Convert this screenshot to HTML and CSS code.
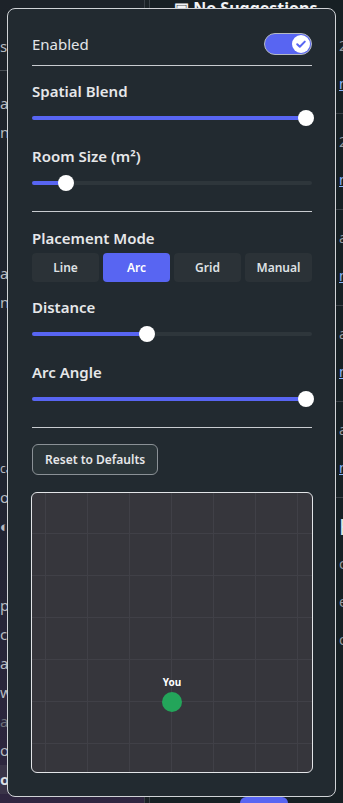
FILE: index.html
```html
<!DOCTYPE html>
<html lang="en">
<head>
  <meta charset="UTF-8" />
  <meta name="viewport" content="width=device-width, initial-scale=1.0"/>
  <title>Spatial Audio Settings</title>
  <link rel="stylesheet" href="styles.css">
</head>
<body>
  <!-- page behind the popout -->
  <div class="page">
    <div class="side">
      <div class="side-row head">st</div>
      <div class="side-group g1">
        <div class="side-row">a</div>
        <div class="side-row">n</div>
      </div>
      <div class="side-group g2">
        <div class="side-row">a</div>
        <div class="side-row">n</div>
      </div>
      <div class="side-group g3">
        <div class="side-row small">ca</div>
        <div class="side-row">o v</div>
        <div class="side-row">◐</div>
      </div>
      <div class="side-group g4">
        <div class="side-row">p</div>
        <div class="side-row">ch</div>
        <div class="side-row">ar</div>
        <div class="side-row">w</div>
        <div class="side-row dim">a</div>
        <div class="side-row">ou</div>
        <div class="side-row strong">of</div>
      </div>
    </div>
    <div class="main">
      <div class="main-title">▣ No Suggestions</div>
      <div class="main-row">2d</div>
      <div class="main-row link">n</div>
      <div class="main-row">2d</div>
      <div class="main-row link">n</div>
      <div class="main-row">a</div>
      <div class="main-row link">n</div>
      <div class="main-row">a</div>
      <div class="main-row link">n</div>
      <div class="main-row">a</div>
      <div class="main-row link">n</div>
      <div class="main-row big">H</div>
      <div class="main-row">c</div>
      <div class="main-row">e</div>
      <div class="main-row">on</div>
      <div class="main-bottom"><span class="pill"></span></div>
    </div>
  </div>

  <!-- Popout -->
  <div class="panel">
    <div class="toggle-row">
      <span>Enabled</span>
      <div class="toggle on">
        <span class="knob">
          <svg width="18" height="18" viewBox="0 0 18 18"><path d="M5.2 9.3l2.6 2.5 5-5.2" fill="none" stroke="#5865f2" stroke-width="2" stroke-linecap="round" stroke-linejoin="round"/></svg>
        </span>
      </div>
    </div>
    <hr class="divider first">

    <div class="field">
      <label>Spatial Blend</label>
      <div class="slider" style="--v: 98%"><div class="fill"></div><div class="thumb"></div></div>
    </div>
    <div class="field">
      <label>Room Size (m²)</label>
      <div class="slider" style="--v: 12%"><div class="fill"></div><div class="thumb"></div></div>
    </div>
    <hr class="divider">

    <div class="field mode">
      <label>Placement Mode</label>
      <div class="segmented">
        <button>Line</button>
        <button class="active">Arc</button>
        <button>Grid</button>
        <button>Manual</button>
      </div>
    </div>
    <div class="field">
      <label>Distance</label>
      <div class="slider" style="--v: 41%"><div class="fill"></div><div class="thumb"></div></div>
    </div>
    <div class="field">
      <label>Arc Angle</label>
      <div class="slider" style="--v: 98%"><div class="fill"></div><div class="thumb"></div></div>
    </div>
    <hr class="divider">

    <button class="reset-btn">Reset to Defaults</button>

    <div class="stage">
      <div class="listener" style="left: 130px; top: 199px;">
        <span class="listener-name">You</span>
      </div>
    </div>
  </div>
</body>
</html>
```

FILE: styles.css
```css
* {
  margin: 0;
  padding: 0;
  box-sizing: border-box;
}
html,
body {
  overflow: hidden;
}
body {
  font-family: 'Noto Sans', 'Open Sans', sans-serif;
  background: #1a2125;
  width: 343px;
  height: 803px;
  position: relative;
  color: #e3e5e8;
}
/* Background page */
.page {
  display: flex;
  height: 803px;
  overflow: hidden;
}
.side {
  width: 145px;
  overflow: hidden;
  background: linear-gradient(to bottom, #1d2329 0%, #1f2430 60%, #2f2640 100%);
  border-right: 1px solid #3a4046;
  padding-top: 32px;
  color: #b5bac1;
  font-size: 15px;
}
.side-row {
  height: 29px;
  line-height: 29px;
}
.side-row.head {
  height: 39px;
  padding-bottom: 10px;
  border-bottom: 1px solid #4a5056;
}
.side-group.g1 { margin-top: 18px; }
.side-group.g2 { margin-top: 112px; }
.side-group.g3 { margin-top: 137px; }
.side-group.g4 { margin-top: 50px; }
.side-row.small { font-size: 12px; }
.side-row.dim { color: #6d717a; }
.side-row.strong {
  font-weight: 700;
  background: #3a3448;
  color: #dbdee1;
}
.main {
  flex: 1;
  overflow: hidden;
  background: #172024;
  border-left: 1px solid #3a4046;
  margin-left: 4px;
  padding-left: 24px;
  position: relative;
  font-size: 14px;
  color: #949ba4;
}
.main-title {
  font-weight: 700;
  color: #f2f3f5;
  font-size: 16px;
  line-height: 20px;
  margin-top: -2px;
  white-space: nowrap;
}
.main-row {
  padding-left: 165px;
  height: 20px;
  line-height: 20px;
  margin-top: 18px;
}
.main-row.link {
  color: #8ab4f8;
  text-decoration: underline;
  border-bottom: 1px solid #3a4046;
  padding-bottom: 18px;
  height: 40px;
}
.main-row.big {
  font-size: 22px;
  color: #e3e5e8;
}
.main-bottom {
  position: absolute;
  bottom: -6px;
  left: 90px;
}
.pill {
  display: block;
  width: 48px;
  height: 12px;
  border-radius: 6px;
  background: #5865f2;
}

/* Popout panel */
.panel {
  position: absolute;
  top: 8px;
  left: 7px;
  width: 329px;
  height: 789px;
  background: #222a30;
  border: 1px solid #d0d3d6;
  border-radius: 8px;
  padding: 24px 23px 23px 24px;
  display: flex;
  flex-direction: column;
}
.toggle-row {
  display: flex;
  justify-content: space-between;
  align-items: center;
  height: 22px;
  font-size: 15px;
  line-height: 22px;
}
.toggle {
  width: 48px;
  height: 22px;
  border-radius: 11px;
  background: #3c4248;
  border: 1px solid #b5bac1;
  display: flex;
  align-items: center;
  padding: 0 1px;
}
.toggle.on {
  background: #5865f2;
  justify-content: flex-end;
}
.knob {
  width: 18px;
  height: 18px;
  border-radius: 50%;
  background: #fff;
  display: block;
}
.knob svg {
  display: block;
}
.divider {
  flex: none;
  border: none;
  height: 1px;
  background: #c9ccd0;
  margin: 0 0 16px;
}
.divider.first {
  margin: 10px 0 15px;
}
.field {
  display: flex;
  flex-direction: column;
  gap: 9px;
  margin-bottom: 20px;
}
.field label {
  font-size: 15px;
  font-weight: 600;
  line-height: 20px;
  color: #e6e7e9;
}
.field.mode {
  gap: 5px;
  margin-bottom: 15px;
}
.slider {
  position: relative;
  height: 16px;
}
.slider::before {
  content: '';
  position: absolute;
  left: 0;
  right: 0;
  top: 6px;
  height: 4px;
  border-radius: 2px;
  background: #2e363b;
}
.slider .fill {
  position: absolute;
  left: 0;
  top: 6px;
  height: 4px;
  width: var(--v);
  border-radius: 2px;
  background: #5865f2;
}
.slider .thumb {
  position: absolute;
  top: 0;
  left: var(--v);
  width: 16px;
  height: 16px;
  margin-left: -8px;
  border-radius: 50%;
  background: #fff;
}
.segmented {
  display: grid;
  grid-template-columns: repeat(4, 1fr);
  gap: 4px;
}
.segmented button {
  height: 29px;
  border: none;
  border-radius: 4px;
  background: #2b3237;
  color: #dfe1e4;
  font-family: inherit;
  font-size: 12px;
  font-weight: 600;
  cursor: pointer;
}
.segmented button.active {
  background: #5865f2;
  color: #fff;
}
.reset-btn {
  align-self: flex-start;
  flex: none;
  height: 31px;
  padding: 0 12px;
  border: 1px solid #8b9196;
  border-radius: 6px;
  background: #2b3539;
  color: #e6e7e9;
  font-family: inherit;
  font-size: 12px;
  font-weight: 600;
  cursor: pointer;
}
.stage {
  flex: none;
  position: relative;
  margin: 17px -1px 0;
  height: 281px;
  border: 1px solid #e3e5e8;
  border-radius: 6px;
  background-color: #36363c;
  background-image:
    linear-gradient(to right, #404047 1px, transparent 1px),
    linear-gradient(to bottom, #404047 1px, transparent 1px);
  background-size: 42px 42px;
  background-position: 13px 40px;
  overflow: hidden;
}
.listener {
  position: absolute;
  width: 20px;
  height: 20px;
  border-radius: 50%;
  background: #23a55a;
}
.listener-name {
  position: absolute;
  bottom: 24px;
  left: 50%;
  transform: translateX(-50%);
  font-size: 10px;
  font-weight: 700;
  color: #fff;
  line-height: 12px;
}
```
